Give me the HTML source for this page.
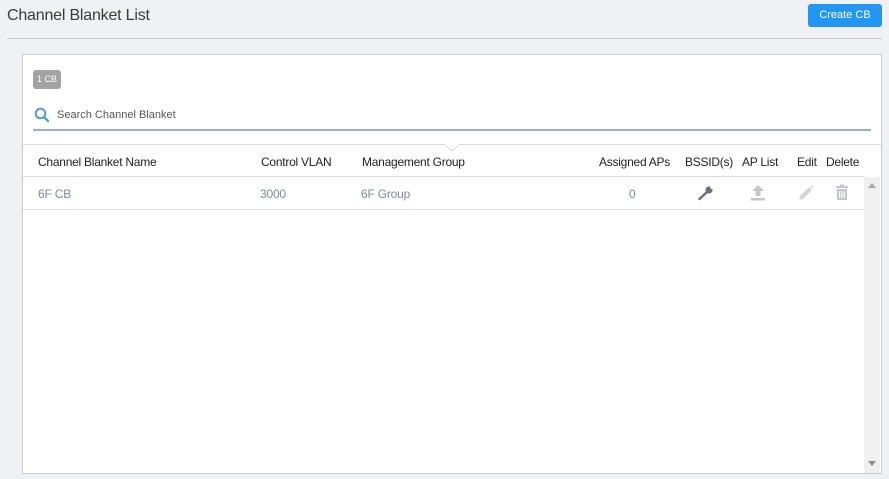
<!DOCTYPE html>
<html><head><meta charset="utf-8"><style>
*{box-sizing:border-box;margin:0;padding:0}
body{width:889px;height:479px;background:#f0f1f5;font-family:"Liberation Sans",sans-serif;position:relative;overflow:hidden;color:#222}
.abs{position:absolute}
.title{left:7px;top:7px;font-size:16px;color:#3a3a3a;letter-spacing:-0.2px}
.btn{left:808px;top:4px;width:74px;height:23px;background:#2196f3;color:#fff;font-size:11px;border-radius:3px;text-align:center;line-height:23px}
.hr{left:7px;top:38px;width:875px;height:1px;background:#c8cacf}
.panel{left:22px;top:54px;width:860px;height:420px;background:#fff;border:1px solid #c8cacf}
.badge{left:33px;top:70px;width:28px;height:19px;background:#a3a3a3;color:#fff;font-size:9px;border-radius:3px;text-align:center;line-height:19px}
.search{left:57px;top:109px;font-size:11px;color:#555}
.sline{left:33px;top:129px;width:838px;height:2px;background:#9cb0c4}
.hline{left:23px;top:144px;width:858px;height:1px;background:#d6d8dc}
.th{top:155px;font-size:12px;color:#222;letter-spacing:-0.25px}
.h2{left:23px;top:176px;width:841px;height:1px;background:#d6d8dc}
.td{top:187px;font-size:12px;color:#7f8799;letter-spacing:-0.2px}
.r2{left:23px;top:209px;width:841px;height:1px;background:#e3e4e6}
.sb{left:864px;top:177px;width:16px;height:296px;background:#f0f0f0}
</style></head><body>
<div class="abs title">Channel Blanket List</div>
<div class="abs btn">Create CB</div>
<div class="abs hr"></div>
<div class="abs panel"></div>
<div class="abs badge">1 CB</div>
<svg class="abs" style="left:34px;top:107px" width="16" height="16" viewBox="0 0 16 16"><circle cx="6.5" cy="6.5" r="4.8" fill="none" stroke="#5b9bd5" stroke-width="2"/><line x1="10" y1="10" x2="14" y2="14" stroke="#5b9bd5" stroke-width="2.4" stroke-linecap="round"/></svg>
<div class="abs search">Search Channel Blanket</div>
<div class="abs sline"></div>
<div class="abs hline"></div>
<svg class="abs" style="left:444px;top:144px" width="16" height="9"><polyline points="0,0 8,7 16,0" fill="#fff" stroke="#d6d8dc"/></svg>
<div class="abs th" style="left:38px">Channel Blanket Name</div>
<div class="abs th" style="left:261px">Control VLAN</div>
<div class="abs th" style="left:362px">Management Group</div>
<div class="abs th" style="left:599px">Assigned APs</div>
<div class="abs th" style="left:685px">BSSID(s)</div>
<div class="abs th" style="left:742px">AP List</div>
<div class="abs th" style="left:797px">Edit</div>
<div class="abs th" style="left:826px">Delete</div>
<div class="abs h2"></div>
<div class="abs td" style="left:38px">6F CB</div>
<div class="abs td" style="left:260px">3000</div>
<div class="abs td" style="left:361px">6F Group</div>
<div class="abs td" style="left:629px">0</div>
<svg class="abs" style="left:697px;top:185px" width="18" height="16" viewBox="0 0 18 16"><path d="M2.5 14 L10 7" stroke="#6b6f7a" stroke-width="2.4" stroke-linecap="round"/><circle cx="12" cy="5" r="3.6" fill="#6b6f7a"/><path d="M12.5 1 L16.5 1 L16.5 4 Z" fill="#fff"/><circle cx="15" cy="2.5" r="1.6" fill="#fff"/></svg>
<svg class="abs" style="left:750px;top:184px" width="16" height="17" viewBox="0 0 16 17"><path d="M8 1 L14 7 L10.5 7 L10.5 12 L5.5 12 L5.5 7 L2 7 Z" fill="#c4c6cb"/><rect x="1" y="14" width="14" height="2.5" fill="#c4c6cb"/></svg>
<svg class="abs" style="left:797px;top:184px" width="18" height="18" viewBox="0 0 18 18"><path d="M2 16 L3 12 L12 3 L15 6 L6 15 Z" fill="#d4d6da"/><path d="M13 2 L14 1 L17 4 L16 5 Z" fill="#d4d6da"/></svg>
<svg class="abs" style="left:835px;top:184px" width="14" height="17" viewBox="0 0 14 17"><rect x="1" y="2" width="12" height="2" fill="#c4c6cb"/><rect x="5" y="0.5" width="4" height="2" fill="#c4c6cb"/><path d="M2 5 H12 V16 H2 Z M4 7 V14 H5.2 V7 Z M6.4 7 V14 H7.6 V7 Z M8.8 7 V14 H10 V7 Z" fill="#c4c6cb" fill-rule="evenodd"/></svg>
<div class="abs r2"></div>
<div class="abs sb"></div>
<svg class="abs" style="left:868px;top:183px" width="8" height="5"><polygon points="0,5 4,0 8,5" fill="#a6a6a6"/></svg>
<svg class="abs" style="left:868px;top:461px" width="8" height="5"><polygon points="0,0 8,0 4,5" fill="#8a8a8a"/></svg>
</body></html>
